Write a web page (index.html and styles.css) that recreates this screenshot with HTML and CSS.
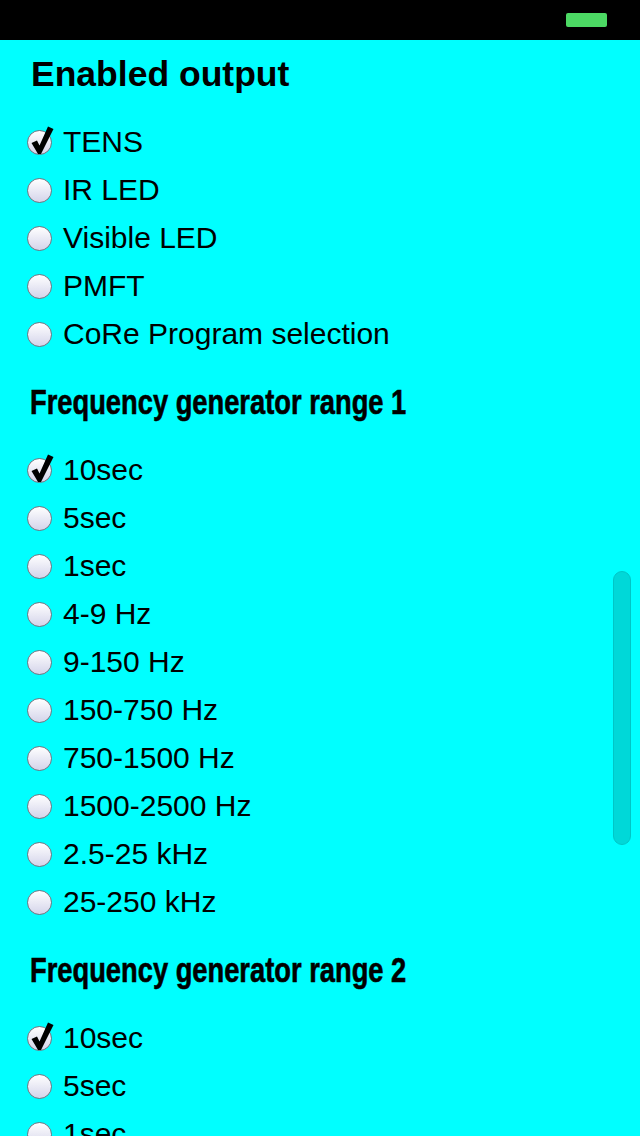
FILE: index.html
```html
<!DOCTYPE html>
<html lang="en">
  <head>
    <meta charset="UTF-8" />
    <meta name="viewport" content="width=device-width, initial-scale=1.0" />
    <title>Settings</title>
    <link rel="stylesheet" href="styles.css">
  </head>
  <body>
    <div class="status-bar">
      <span class="battery"></span>
    </div>

    <div class="content">
      <h2 class="title">Enabled output</h2>
      <div class="option"><span class="radio checked"><svg viewBox="0 0 24 24"><path d="M3.5 12 L9 9.5 L11.5 14.5 L20 -4.5 L25.5 -2 L13 23 L10 23 Z" /></svg></span>TENS</div>
      <div class="option"><span class="radio"></span>IR LED</div>
      <div class="option"><span class="radio"></span>Visible LED</div>
      <div class="option"><span class="radio"></span>PMFT</div>
      <div class="option"><span class="radio"></span>CoRe Program selection</div>

      <h3 class="subtitle"><span>Frequency generator range 1</span></h3>
      <div class="option"><span class="radio checked"><svg viewBox="0 0 24 24"><path d="M3.5 12 L9 9.5 L11.5 14.5 L20 -4.5 L25.5 -2 L13 23 L10 23 Z" /></svg></span>10sec</div>
      <div class="option"><span class="radio"></span>5sec</div>
      <div class="option"><span class="radio"></span>1sec</div>
      <div class="option"><span class="radio"></span>4-9 Hz</div>
      <div class="option"><span class="radio"></span>9-150 Hz</div>
      <div class="option"><span class="radio"></span>150-750 Hz</div>
      <div class="option"><span class="radio"></span>750-1500 Hz</div>
      <div class="option"><span class="radio"></span>1500-2500 Hz</div>
      <div class="option"><span class="radio"></span>2.5-25 kHz</div>
      <div class="option"><span class="radio"></span>25-250 kHz</div>

      <h3 class="subtitle"><span>Frequency generator range 2</span></h3>
      <div class="option"><span class="radio checked"><svg viewBox="0 0 24 24"><path d="M3.5 12 L9 9.5 L11.5 14.5 L20 -4.5 L25.5 -2 L13 23 L10 23 Z" /></svg></span>10sec</div>
      <div class="option"><span class="radio"></span>5sec</div>
      <div class="option"><span class="radio"></span>1sec</div>
    </div>

    <div class="scroll-thumb"></div>
  </body>
</html>
```

FILE: styles.css
```css
html,
body {
  margin: 0;
  height: 1136px;
  overflow: hidden;
}
body {
  position: relative;
  background-color: #00ffff;
  font-family: "Liberation Sans", Arial, sans-serif;
  color: #000;
}
.status-bar {
  height: 40px;
  background-color: #000;
  display: flex;
  justify-content: flex-end;
  align-items: center;
  padding-right: 33px;
}
.battery {
  width: 41px;
  height: 14px;
  background-color: #4cd964;
  border-radius: 2px;
}
.content {
  padding: 14px 0 0 27px;
}
.title {
  margin: 0 0 24px 4px;
  height: 40px;
  line-height: 40px;
  font-size: 35.5px;
  font-weight: bold;
}
.subtitle {
  margin: 24px 0 24px 3px;
  height: 40px;
  line-height: 40px;
  font-size: 35px;
  font-weight: bold;
  white-space: nowrap;
}
.subtitle span {
  display: inline-block;
  transform: scaleX(0.78);
  transform-origin: left center;
  -webkit-text-stroke: 0.6px #000;
}
.option {
  height: 48px;
  display: flex;
  align-items: center;
  font-size: 30px;
}
.radio {
  position: relative;
  width: 23px;
  height: 23px;
  margin-right: 11px;
  border: 1px solid #737380;
  border-radius: 50%;
  background: linear-gradient(#ffffff, #d4d4ea);
  flex-shrink: 0;
}
.radio svg {
  position: absolute;
  left: 0;
  top: 0;
  width: 24px;
  height: 24px;
  overflow: visible;
}
.radio path {
  fill: #000;
}
.scroll-thumb {
  position: absolute;
  left: 613px;
  top: 571px;
  width: 16px;
  height: 272px;
  background-color: #00d8d8;
  border: 1px solid #00c6c6;
  border-radius: 9px;
}
```
